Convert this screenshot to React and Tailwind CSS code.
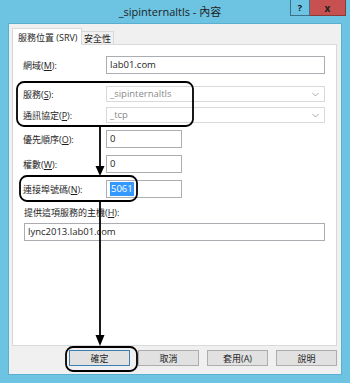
import React from 'react';

const font = "font-['Open_Sans','Noto_Sans_CJK_TC',sans-serif]";

const Label = ({ text, hot }) => (
  <span className="text-[9px] leading-none text-[#1e1e1e]">
    {text}(<span className="underline">{hot}</span>):
  </span>
);

const TextBox = ({ value, className = '', children }) => (
  <div className={`h-[18px] border border-[#abadb3] bg-white flex items-center pl-[3px] text-[9.5px] leading-none text-[#1e1e1e] ${className}`}>
    {children || value}
  </div>
);

const DisabledSelect = ({ value }) => (
  <div className="w-[219px] h-[16px] border border-[#d9d9d9] bg-white flex items-center justify-between pl-[3px] pr-[5px] text-[9.5px] leading-none text-[#8a8a8a]">
    <span>{value}</span>
    <svg width="7" height="5" viewBox="0 0 7 5">
      <path d="M0.5 1 L3.5 4 L6.5 1" fill="none" stroke="#a8a8a8" strokeWidth="1" />
    </svg>
  </div>
);

const Row = ({ label, hot, className = '', children }) => (
  <div className={`flex items-center text-[9px] leading-none ${className}`}>
    <div className="w-[83px] shrink-0 flex items-center">
      <Label text={label} hot={hot} />
    </div>
    {children}
  </div>
);

const Button = ({ children, primary }) => (
  <div
    className={`w-[61px] h-[16px] flex items-center justify-center text-[9px] leading-none text-[#1e1e1e] bg-[#e1e1e1] border ${
      primary ? 'border-[#3c7fb1]' : 'border-[#adadad]'
    }`}
  >
    {children}
  </div>
);

export default function App() {
  return (
    <div className={`relative w-[350px] h-[383px] bg-[#6cc3e2] flex flex-col leading-none ${font}`}>
      {/* title bar */}
      <div className="h-[23px] shrink-0 flex items-start">
        <div className="flex-1 h-[23px] flex items-center justify-center pl-[50px] text-[11px] text-[#1e1e1e]">
          _sipinternaltls - 內容
        </div>
        <div className="w-[20px] h-[16px] border-x border-b border-[#3e6f86] flex items-center justify-center text-[9px] font-bold text-[#111]">
          ?
        </div>
        <div className="w-[36px] h-[16px] bg-[#c75050] border-b border-r border-[#8a3a36] flex items-center justify-center text-[10px] font-bold text-[#222] mr-[4px]">
          x
        </div>
      </div>

      {/* client area */}
      <div className="flex-1 ml-[8px] mr-[8px] mb-[8px] bg-[#f0f0f0] border border-[#5aaed0] flex flex-col pl-[3px] pr-[4px]">
        {/* tabs */}
        <div className="flex items-end h-[20px] shrink-0">
          <div className="relative z-10 -mb-px h-[17px] w-[70px] bg-white border-x border-t border-[#d9d9d9] flex items-center pl-[5px] text-[9px] text-[#1e1e1e]">
            服務位置 (SRV)
          </div>
          <div className="h-[13px] w-[32px] bg-[#f0f0f0] border-r border-t border-[#d9d9d9] flex items-center justify-center text-[9px] text-[#1e1e1e]">
            安全性
          </div>
        </div>

        {/* panel */}
        <div className="h-[302px] shrink-0 bg-white border border-[#d9d9d9] pl-[10px] pr-[11px] pt-[11px] flex flex-col">
          <Row label="網域" hot="M">
            <TextBox value="lab01.com" className="flex-1" />
          </Row>
          <Row label="服務" hot="S" className="mt-[12px]">
            <DisabledSelect value="_sipinternaltls" />
          </Row>
          <Row label="通訊協定" hot="P" className="mt-[5px]">
            <DisabledSelect value="_tcp" />
          </Row>
          <Row label="優先順序" hot="O" className="mt-[7px]">
            <TextBox value="0" className="w-[76px]" />
          </Row>
          <Row label="權數" hot="W" className="mt-[7px]">
            <TextBox value="0" className="w-[76px]" />
          </Row>
          <Row label="連接埠號碼" hot="N" className="mt-[7px]">
            <TextBox className="w-[76px] pl-[1px]">
              <span className="bg-[#3399ff] text-white px-[1px] py-[2px]">5061</span>
            </TextBox>
          </Row>
          <div className="mt-[7px] ml-[1px] h-[14px] flex items-center text-[9px] leading-none">
            <Label text="提供這項服務的主機" hot="H" />
          </div>
          <TextBox value="lync2013.lab01.com" className="mt-[4px] ml-[1px]" />
        </div>

        {/* buttons */}
        <div className="mt-[4px] flex justify-end gap-[8px]">
          <Button primary>確定</Button>
          <Button>取消</Button>
          <Button>套用(A)</Button>
          <Button>說明</Button>
        </div>
      </div>

      {/* annotation overlay */}
      <svg className="absolute left-0 top-0 pointer-events-none" width="350" height="383" viewBox="0 0 350 383">
        <g fill="none" stroke="#000" strokeWidth="1.8">
          <rect x="17" y="82" width="176" height="44" rx="7" />
          <rect x="20" y="176" width="117" height="25" rx="7" />
          <rect x="66" y="347" width="71" height="24" rx="7" />
          <path d="M100 126 V168" />
          <path d="M100 201 V337" />
        </g>
        <path d="M95.5 166 H104.5 L100 176 Z" fill="#000" />
        <path d="M95.5 335 H104.5 L100 346 Z" fill="#000" />
      </svg>
    </div>
  );
}
